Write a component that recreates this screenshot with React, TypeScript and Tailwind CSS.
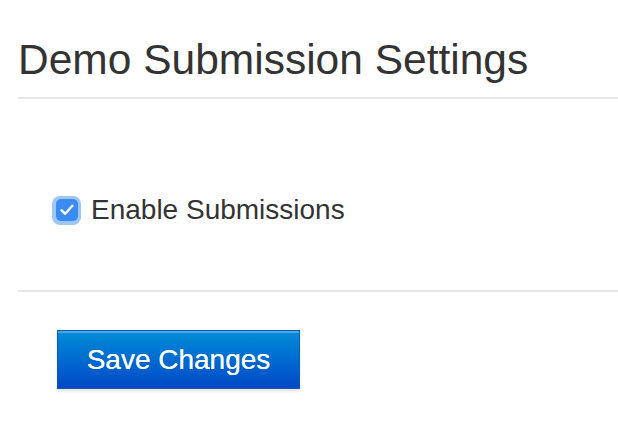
export default function App() {
  return (
    <div className="min-h-[446px] bg-white pl-[18px] font-['Liberation_Sans',Arial,sans-serif] text-[#333]">
      <div className="border-b-2 border-[#e6e6e6] pt-[37px] pb-[14px]">
        <h1 className="text-[42.5px] leading-[46px] font-normal">Demo Submission Settings</h1>
      </div>

      <div className="border-b-2 border-[#e6e6e6] pt-[95px] pb-[64px]">
        <label className="flex items-center gap-[10px] pl-[34px]">
          <span className="flex h-[29px] w-[29px] items-center justify-center rounded-[8px] bg-[#9fc6f8]">
            <span className="flex h-[22px] w-[22px] items-center justify-center rounded-[5px] bg-[#3a8cf2]">
              <svg width="14" height="12" viewBox="0 0 14 12" fill="none">
                <path d="M1.6 6.3 L5.2 9.8 L12.4 1.8" stroke="white" strokeWidth="2.4" strokeLinecap="round" strokeLinejoin="round" />
              </svg>
            </span>
          </span>
          <span className="text-[28px] leading-[32px]">Enable Submissions</span>
        </label>
      </div>

      <div className="pt-[38px] pl-[39px]">
        <button className="flex h-[59px] w-[243px] items-center justify-center border border-[#0a5cb3] bg-gradient-to-b from-[#0b8cd8] to-[#0446c6] text-[28px] text-white [text-shadow:0_0_0.6px_white] shadow-[inset_0_2px_0_rgba(255,255,255,0.25),0_2px_3px_rgba(0,0,0,0.12)]">
          Save Changes
        </button>
      </div>
    </div>
  );
}
